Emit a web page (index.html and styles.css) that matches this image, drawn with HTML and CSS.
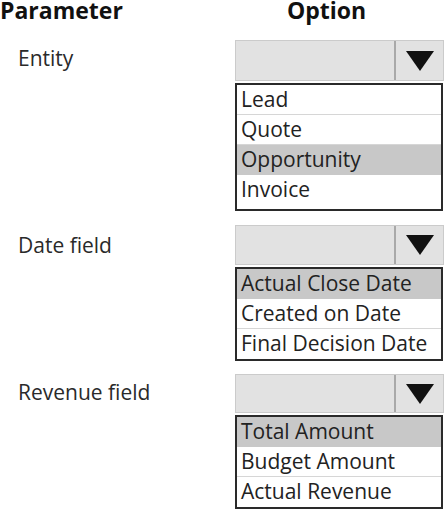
FILE: index.html
```html
<!DOCTYPE html>
<html lang="en">
<head>
<meta charset="utf-8">
<title>Parameter / Option</title>
<link rel="stylesheet" href="styles.css">
</head>
<body>
<div class="page">
  <div class="header">
    <div class="h-param">Parameter</div>
    <div class="h-option">Option</div>
  </div>

  <div class="row row-1">
    <div class="label">Entity</div>
    <div class="control">
      <div class="select">
        <div class="select-field"></div>
        <div class="select-btn"><svg class="arrow" width="28" height="20" viewBox="0 0 28 20"><polygon points="0,0 28,0 14,20" fill="#111"/></svg></div>
      </div>
      <ul class="list list-pad">
        <li class="item">Lead</li>
        <li class="item">Quote</li>
        <li class="item selected">Opportunity</li>
        <li class="item last">Invoice</li>
      </ul>
    </div>
  </div>

  <div class="row row-2">
    <div class="label">Date field</div>
    <div class="control">
      <div class="select">
        <div class="select-field"></div>
        <div class="select-btn"><svg class="arrow" width="28" height="20" viewBox="0 0 28 20"><polygon points="0,0 28,0 14,20" fill="#111"/></svg></div>
      </div>
      <ul class="list">
        <li class="item selected">Actual Close Date</li>
        <li class="item">Created on Date</li>
        <li class="item last">Final Decision Date</li>
      </ul>
    </div>
  </div>

  <div class="row row-3">
    <div class="label">Revenue field</div>
    <div class="control">
      <div class="select">
        <div class="select-field"></div>
        <div class="select-btn"><svg class="arrow" width="28" height="20" viewBox="0 0 28 20"><polygon points="0,0 28,0 14,20" fill="#111"/></svg></div>
      </div>
      <ul class="list">
        <li class="item selected">Total Amount</li>
        <li class="item">Budget Amount</li>
        <li class="item last">Actual Revenue</li>
      </ul>
    </div>
  </div>
</div>
</body>
</html>
```

FILE: styles.css
```css
html, body {
  margin: 0;
  padding: 0;
  background: #ffffff;
}

.page {
  width: 446px;
  font-family: "Open Sans", "Noto Sans", sans-serif;
  color: #222222;
}

.header {
  display: flex;
  height: 20px;
  font-weight: 700;
  font-size: 23px;
  line-height: 20px;
  color: #111111;
}

.h-param {
  width: 287px;
}

.row {
  display: flex;
}

.row-1 { margin-top: 20px; }
.row-2 { margin-top: 14px; }
.row-3 { margin-top: 13px; }

.label {
  width: 217px;
  padding-left: 18px;
  height: 40px;
  line-height: 36px;
  font-size: 21px;
  color: #2a2a2a;
}

.row-2 .label {
  line-height: 40px;
}

.row-3 .label {
  line-height: 36px;
}

.control {
  width: 209px;
  display: flex;
  flex-direction: column;
  gap: 2px;
}

.select {
  display: flex;
  height: 41px;
  box-sizing: border-box;
  border: 1px solid #cbcbcb;
  background: #e2e2e2;
}

.row-2 .select {
  height: 40px;
}

.row-3 .select {
  height: 39px;
}

.select-field {
  flex: 1;
}

.select-btn {
  width: 47px;
  border-left: 2px solid #a9a9a9;
  display: flex;
  align-items: center;
  justify-content: center;
}

.list {
  margin: 0;
  padding: 0;
  list-style: none;
  border: 2px solid #2a2a2a;
  width: 208px;
  box-sizing: border-box;
  background: #ffffff;
}

.list-pad {
  padding-bottom: 4px;
}

.item {
  box-sizing: border-box;
  height: 30px;
  line-height: 29px;
  padding-left: 4px;
  font-size: 21px;
  color: #222222;
  border-bottom: 1px solid #d6d6d6;
  white-space: nowrap;
}

.item.last {
  border-bottom: none;
}

.item.selected {
  background: #c8c8c8;
  border-bottom-color: #c8c8c8;
}
```
